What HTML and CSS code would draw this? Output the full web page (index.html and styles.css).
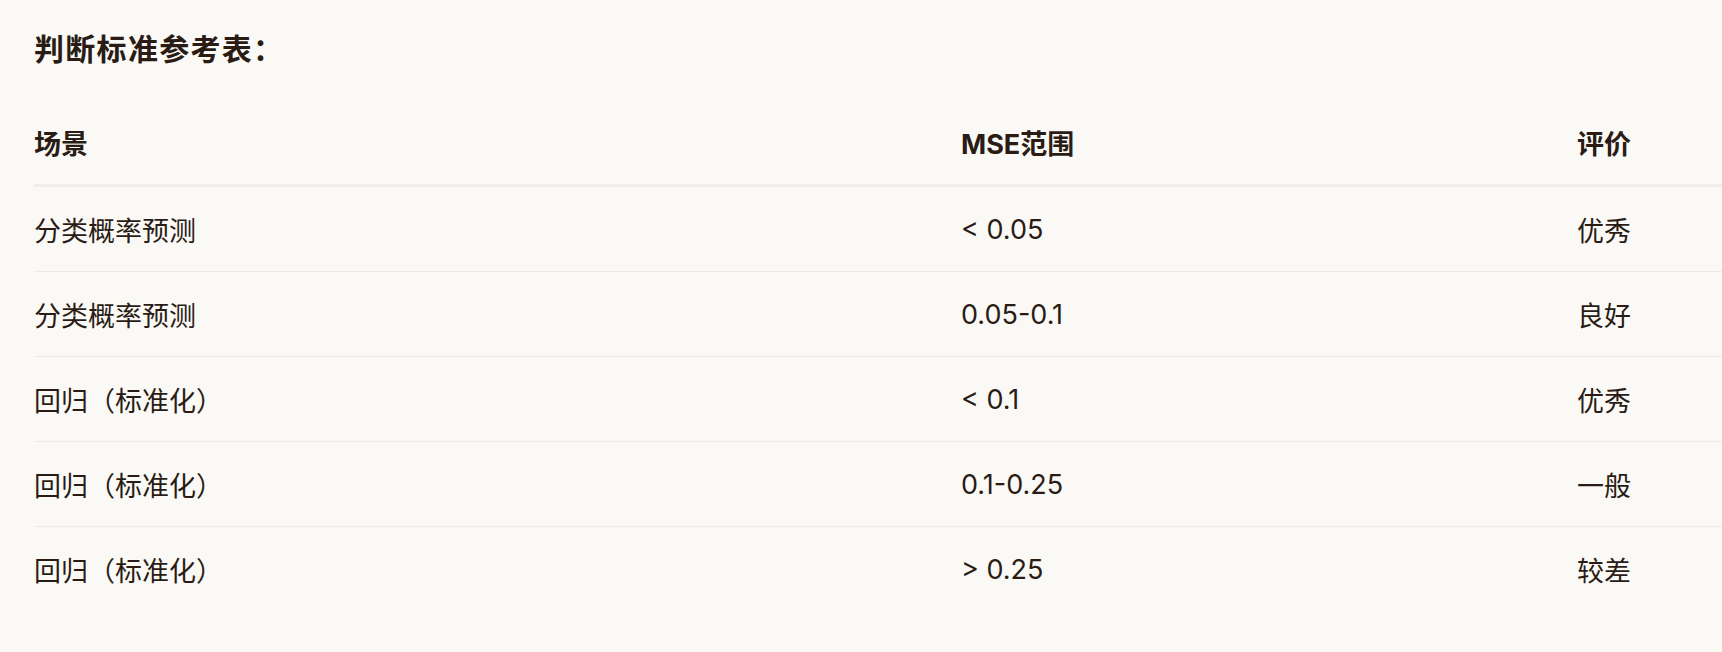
FILE: index.html
```html
<!DOCTYPE html>
<html lang="zh-CN">
<head>
<meta charset="utf-8">
<title>判断标准参考表</title>
<link rel="stylesheet" href="styles.css">
</head>
<body>
<main class="page">
  <h3 class="title">判断标准参考表：</h3>
  <table class="ref-table">
    <colgroup>
      <col class="col-scene">
      <col class="col-range">
      <col class="col-eval">
    </colgroup>
    <thead>
      <tr><th>场景</th><th>MSE范围</th><th>评价</th></tr>
    </thead>
    <tbody>
      <tr><td>分类概率预测</td><td>&lt; 0.05</td><td>优秀</td></tr>
      <tr><td>分类概率预测</td><td>0.05-0.1</td><td>良好</td></tr>
      <tr><td>回归（标准化）</td><td>&lt; 0.1</td><td>优秀</td></tr>
      <tr><td>回归（标准化）</td><td>0.1-0.25</td><td>一般</td></tr>
      <tr><td>回归（标准化）</td><td>&gt; 0.25</td><td>较差</td></tr>
    </tbody>
  </table>
</main>
</body>
</html>
```

FILE: styles.css
```css
html, body {
  margin: 0;
  padding: 0;
  background: #faf9f6;
}

body {
  font-family: Inter, "Noto Sans CJK SC", sans-serif;
  color: #2a1c15;
  overflow: hidden;
}

.page {
  padding: 29px 0 0 34px;
}

.title {
  margin: 0;
  font-size: 30px;
  line-height: 41px;
  font-weight: 700;
  letter-spacing: 1.3px;
}

.ref-table {
  margin-top: 30px;
  width: 100%;
  border-collapse: collapse;
  table-layout: fixed;
  font-size: 27px;
}

.col-scene { width: 927px; }
.col-range { width: 616px; }

.ref-table th,
.ref-table td {
  padding: 0;
  text-align: left;
  vertical-align: middle;
  white-space: nowrap;
}

.ref-table th {
  height: 84px;
  font-weight: 700;
  border-bottom: 3px solid #eeedeb;
}

.ref-table td {
  height: 84px;
  font-weight: 400;
  border-bottom: 1px solid #edebe8;
}

.ref-table tbody tr:last-child td {
  border-bottom: none;
}
```
